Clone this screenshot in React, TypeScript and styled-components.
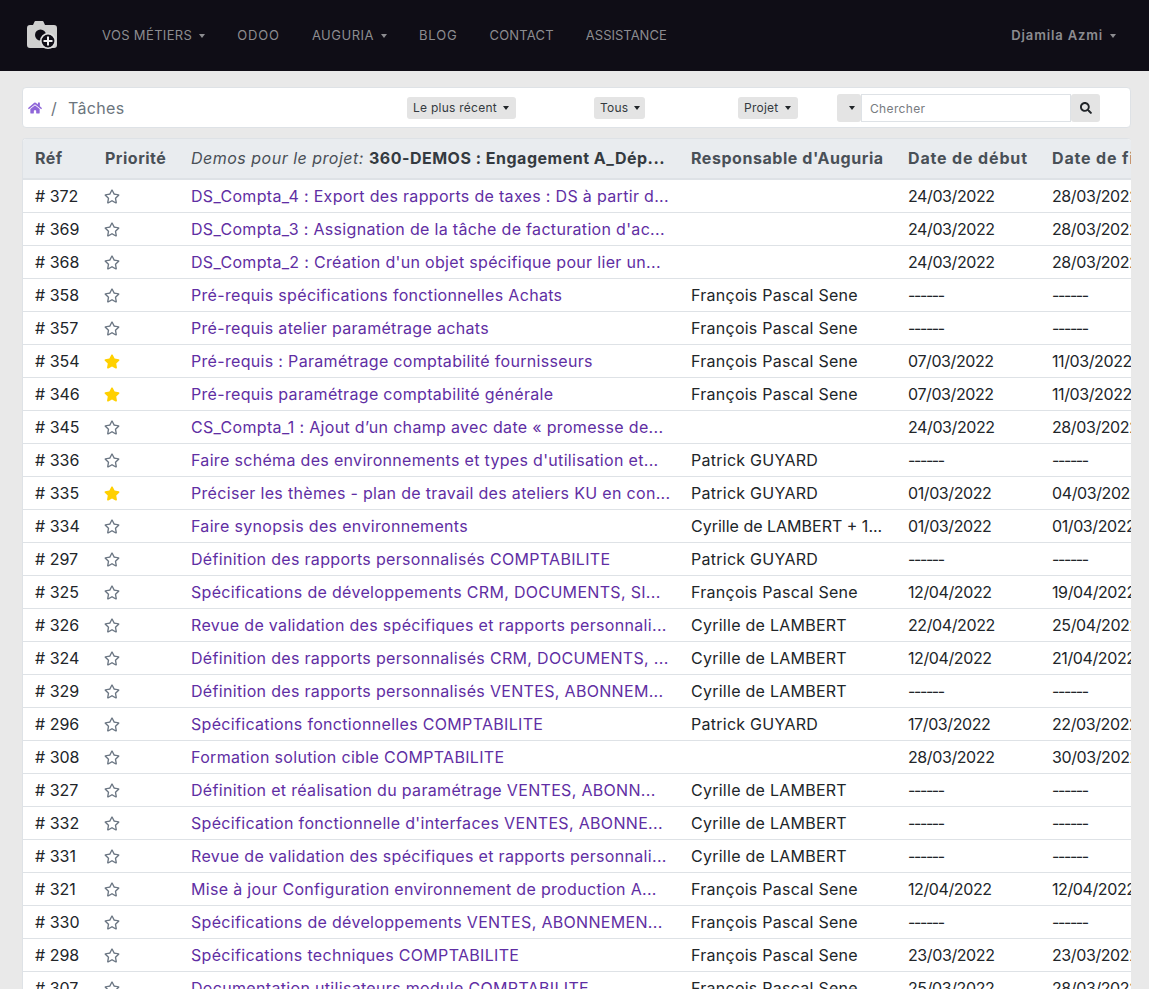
import React from 'react';
import styled, { createGlobalStyle } from 'styled-components';
import { FaHome, FaRegStar, FaSearch, FaStar } from 'react-icons/fa';

type Task = {
  ref: number;
  fav?: boolean;
  name: string;
  owner?: string;
  start?: string;
  end?: string;
};

const tasks: Task[] = [
  { ref: 372, name: 'DS_Compta_4 : Export des rapports de taxes : DS à partir d...', start: '24/03/2022', end: '28/03/2022' },
  { ref: 369, name: "DS_Compta_3 : Assignation de la tâche de facturation d'ac...", start: '24/03/2022', end: '28/03/2022' },
  { ref: 368, name: "DS_Compta_2 : Création d'un objet spécifique pour lier un...", start: '24/03/2022', end: '28/03/2022' },
  { ref: 358, name: 'Pré-requis spécifications fonctionnelles Achats', owner: 'François Pascal Sene' },
  { ref: 357, name: 'Pré-requis atelier paramétrage achats', owner: 'François Pascal Sene' },
  { ref: 354, fav: true, name: 'Pré-requis : Paramétrage comptabilité fournisseurs', owner: 'François Pascal Sene', start: '07/03/2022', end: '11/03/2022' },
  { ref: 346, fav: true, name: 'Pré-requis paramétrage comptabilité générale', owner: 'François Pascal Sene', start: '07/03/2022', end: '11/03/2022' },
  { ref: 345, name: 'CS_Compta_1 : Ajout d’un champ avec date « promesse de...', start: '24/03/2022', end: '28/03/2022' },
  { ref: 336, name: "Faire schéma des environnements et types d'utilisation et...", owner: 'Patrick GUYARD' },
  { ref: 335, fav: true, name: 'Préciser les thèmes - plan de travail des ateliers KU en con...', owner: 'Patrick GUYARD', start: '01/03/2022', end: '04/03/2022' },
  { ref: 334, name: 'Faire synopsis des environnements', owner: 'Cyrille de LAMBERT + 1...', start: '01/03/2022', end: '01/03/2022' },
  { ref: 297, name: 'Définition des rapports personnalisés COMPTABILITE', owner: 'Patrick GUYARD' },
  { ref: 325, name: 'Spécifications de développements CRM, DOCUMENTS, SI...', owner: 'François Pascal Sene', start: '12/04/2022', end: '19/04/2022' },
  { ref: 326, name: 'Revue de validation des spécifiques et rapports personnali...', owner: 'Cyrille de LAMBERT', start: '22/04/2022', end: '25/04/2022' },
  { ref: 324, name: 'Définition des rapports personnalisés CRM, DOCUMENTS, ...', owner: 'Cyrille de LAMBERT', start: '12/04/2022', end: '21/04/2022' },
  { ref: 329, name: 'Définition des rapports personnalisés VENTES, ABONNEM...', owner: 'Cyrille de LAMBERT' },
  { ref: 296, name: 'Spécifications fonctionnelles COMPTABILITE', owner: 'Patrick GUYARD', start: '17/03/2022', end: '22/03/2022' },
  { ref: 308, name: 'Formation solution cible COMPTABILITE', start: '28/03/2022', end: '30/03/2022' },
  { ref: 327, name: 'Définition et réalisation du paramétrage VENTES, ABONN...', owner: 'Cyrille de LAMBERT' },
  { ref: 332, name: "Spécification fonctionnelle d'interfaces VENTES, ABONNE...", owner: 'Cyrille de LAMBERT' },
  { ref: 331, name: 'Revue de validation des spécifiques et rapports personnali...', owner: 'Cyrille de LAMBERT' },
  { ref: 321, name: 'Mise à jour Configuration environnement de production A...', owner: 'François Pascal Sene', start: '12/04/2022', end: '12/04/2022' },
  { ref: 330, name: 'Spécifications de développements VENTES, ABONNEMEN...', owner: 'François Pascal Sene' },
  { ref: 298, name: 'Spécifications techniques COMPTABILITE', owner: 'François Pascal Sene', start: '23/03/2022', end: '23/03/2022' },
  { ref: 307, name: 'Documentation utilisateurs module COMPTABILITE', owner: 'François Pascal Sene', start: '25/03/2022', end: '28/03/2022' },
];

const GlobalStyle = createGlobalStyle`
  html, body {
    margin: 0;
    height: 989px;
    overflow: hidden;
    background: #e9e9e9;
    font-family: Inter, "Liberation Sans", sans-serif;
    color: #212529;
  }
`;

const Navbar = styled.nav`
  box-sizing: border-box;
  height: 71px;
  display: flex;
  align-items: center;
  padding: 0 33px 1px 26px;
  background: #0f0d16;
`;

const Brand = styled.svg`
  width: 32px;
  height: 28px;
  margin-right: 44px;
`;

const NavLink = styled.a<{ $spacing: number }>`
  margin-right: 32px;
  font-size: 13px;
  letter-spacing: ${(p) => p.$spacing}px;
  color: #8c8c90;
  white-space: nowrap;
`;

const Caret = styled.span`
  display: inline-block;
  margin-left: 7px;
  vertical-align: 2px;
  border-top: 4px solid currentColor;
  border-left: 3.5px solid transparent;
  border-right: 3.5px solid transparent;
`;

const UserMenu = styled.a`
  margin-left: auto;
  font-size: 13px;
  font-weight: 600;
  letter-spacing: 0.85px;
  color: #8c8c90;
  white-space: nowrap;
`;

const Content = styled.main`
  padding: 16px 18px 0 22px;
`;

const Toolbar = styled.div`
  box-sizing: border-box;
  height: 41px;
  display: flex;
  align-items: center;
  padding-left: 5px;
  background: #fff;
  border: 1px solid #dee2e6;
  border-radius: 4px;
`;

const Crumbs = styled.div`
  width: 379px;
  display: flex;
  align-items: center;
  font-size: 16px;
  letter-spacing: 0.3px;
  color: #6c757d;
`;

const HomeIcon = styled(FaHome)`
  width: 14px;
  height: 14px;
  color: #8f66d9;
`;

const Slash = styled.span`
  margin: 0 11px 0 9px;
`;

const FilterButton = styled.button<{ $width: number; $after: number }>`
  box-sizing: border-box;
  width: ${(p) => p.$width}px;
  height: 22px;
  margin-right: ${(p) => p.$after}px;
  padding: 0 6px;
  display: flex;
  align-items: center;
  white-space: nowrap;
  font: inherit;
  font-size: 12px;
  letter-spacing: 0.25px;
  color: #343a40;
  background: #e4e4e4;
  border: 0;
  border-radius: 3px;
`;

const SmallCaret = styled(Caret)`
  margin-left: 6px;
  vertical-align: 0;
  border-top-width: 4px;
  border-left-width: 3px;
  border-right-width: 3px;
  color: #212529;
`;

const SearchGroup = styled.div`
  width: 263px;
  height: 28px;
  display: flex;
  align-items: stretch;
`;

const SearchAddon = styled.span<{ $width: number }>`
  width: ${(p) => p.$width}px;
  display: flex;
  align-items: center;
  justify-content: center;
  background: #e4e4e4;
  color: #212529;
  border-radius: 3px;
`;

const SearchInput = styled.input`
  flex: 1;
  min-width: 0;
  box-sizing: border-box;
  padding: 2px 8px 0;
  font: inherit;
  font-size: 12px;
  letter-spacing: 0.35px;
  background: #fff;
  border: 1px solid #dee2e6;
  outline: none;
  &::placeholder {
    color: #777b80;
    opacity: 1;
  }
`;

const SearchIcon = styled(FaSearch)`
  width: 12px;
  height: 12px;
`;

const TableWrap = styled.div`
  margin-top: 10px;
  overflow: hidden;
  background: #fff;
  border-left: 1px solid #dee2e6;
  border-top: 1px solid #dee2e6;
  border-radius: 4px 4px 0 0;
`;

const Table = styled.table`
  width: 1250px;
  table-layout: fixed;
  border-collapse: collapse;
  font-size: 16px;
`;

const Th = styled.th<{ $spacing?: number }>`
  height: 37px;
  padding: 0 12px 2px;
  text-align: left;
  white-space: nowrap;
  overflow: hidden;
  font-size: 16px;
  font-weight: 700;
  letter-spacing: ${(p) => p.$spacing ?? 0.5}px;
  color: #495057;
  background: #e9ecef;
  border-bottom: 2px solid #dee2e6;
`;

const ProjectLabel = styled.em`
  font-weight: 400;
`;

const ProjectName = styled.span`
  color: #343a40;
`;

const Td = styled.td`
  height: 32px;
  padding: 0 12px;
  white-space: nowrap;
  overflow: hidden;
  border-bottom: 1px solid #dee2e6;
`;

const OwnerCell = styled(Td)<{ $cut: boolean }>`
  letter-spacing: ${(p) => (p.$cut ? 0 : 0.26)}px;
`;

const DateCell = styled(Td)<{ $empty: boolean }>`
  letter-spacing: ${(p) => (p.$empty ? -1.4 : -0.4)}px;
`;

const TaskLink = styled.a`
  letter-spacing: 0.32px;
  color: #5f2ea3;
`;

const StarOn = styled(FaStar)`
  display: block;
  width: 16px;
  height: 15px;
  margin-left: -1px;
  color: #ffd000;
`;

const StarOff = styled(FaRegStar)`
  display: block;
  width: 16px;
  height: 15px;
  margin-left: -1px;
  color: #6b7683;
`;

const columns = [70, 86, 500, 217, 144, 233];

const App = () => (
  <>
    <GlobalStyle />
    <Navbar>
      <Brand viewBox="0 0 32 28">
        <path
          d="M7 4l1.5-3.2a1 1 0 0 1 1-.8h7a1 1 0 0 1 1 .8L19 4h9a3 3 0 0 1 3 3v17a3 3 0 0 1-3 3H4a3 3 0 0 1-3-3V7a3 3 0 0 1 3-3z"
          fill="#d0d0d0"
        />
        <circle cx="14.5" cy="14" r="5.5" fill="#0f0d16" />
        <circle cx="22" cy="20" r="7.2" fill="#0f0d16" stroke="#e0e0e0" strokeWidth="1.6" />
        <path d="M22 15.5v9M17.5 20h9" stroke="#f0f0f0" strokeWidth="2" />
      </Brand>
      <NavLink $spacing={0.35}>VOS MÉTIERS<Caret /></NavLink>
      <NavLink $spacing={0.85}>ODOO</NavLink>
      <NavLink $spacing={0.5}>AUGURIA<Caret /></NavLink>
      <NavLink $spacing={0.85}>BLOG</NavLink>
      <NavLink $spacing={0.2}>CONTACT</NavLink>
      <NavLink $spacing={0}>ASSISTANCE</NavLink>
      <UserMenu>Djamila Azmi<Caret /></UserMenu>
    </Navbar>
    <Content>
      <Toolbar>
        <Crumbs>
          <HomeIcon />
          <Slash>/</Slash>
          Tâches
        </Crumbs>
        <FilterButton $width={109} $after={78}>Le plus récent<SmallCaret /></FilterButton>
        <FilterButton $width={51} $after={93}>Tous<SmallCaret /></FilterButton>
        <FilterButton $width={60} $after={39}>Projet<SmallCaret /></FilterButton>
        <SearchGroup>
          <SearchAddon $width={24}><SmallCaret /></SearchAddon>
          <SearchInput placeholder="Chercher" />
          <SearchAddon $width={29}><SearchIcon /></SearchAddon>
        </SearchGroup>
      </Toolbar>
      <TableWrap>
        <Table>
          <colgroup>
            {columns.map((w, i) => (
              <col key={i} width={w} />
            ))}
          </colgroup>
          <thead>
            <tr>
              <Th>Réf</Th>
              <Th>Priorité</Th>
              <Th>
                <ProjectLabel>Demos pour le projet: </ProjectLabel>
                <ProjectName>360-DEMOS : Engagement A_Dép...</ProjectName>
              </Th>
              <Th $spacing={0.55}>Responsable d'Auguria</Th>
              <Th $spacing={0.85}>Date de début</Th>
              <Th $spacing={0.85}>Date de fin</Th>
            </tr>
          </thead>
          <tbody>
            {tasks.map((t) => (
              <tr key={t.ref}>
                <Td># {t.ref}</Td>
                <Td>{t.fav ? <StarOn /> : <StarOff />}</Td>
                <Td><TaskLink>{t.name}</TaskLink></Td>
                <OwnerCell $cut={!!t.owner?.endsWith('...')}>{t.owner}</OwnerCell>
                <DateCell $empty={!t.start}>{t.start ?? '------'}</DateCell>
                <DateCell $empty={!t.end}>{t.end ?? '------'}</DateCell>
              </tr>
            ))}
          </tbody>
        </Table>
      </TableWrap>
    </Content>
  </>
);

export default App;
